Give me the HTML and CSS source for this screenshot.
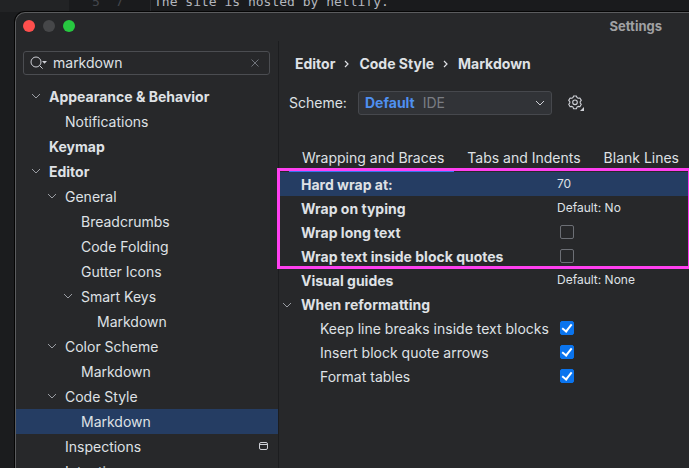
FILE: index.html
```html
<!DOCTYPE html>
<html lang="en">
<head>
<meta charset="utf-8">
<title>Settings</title>
<link rel="stylesheet" href="styles.css">
</head>
<body>
<svg class="symbols" aria-hidden="true">
  <symbol id="chevron" viewBox="0 0 10 10"><path d="M1 3l4 4 4-4" fill="none" stroke="currentColor"/></symbol>
  <symbol id="crumb" viewBox="0 0 6 10"><path d="M1 2l3 3-3 3" fill="none" stroke="currentColor" stroke-width="1.2"/></symbol>
</svg>
<div class="backdrop">
  <span class="gutter">5&nbsp;&nbsp;7</span>
  <code class="source">The site is hosted by netlify.</code>
</div>
<main class="window">
  <header class="titlebar">
    <div class="lights">
      <button class="light close" aria-label="Close"></button>
      <button class="light minimize" aria-label="Minimize"></button>
      <button class="light zoom" aria-label="Zoom"></button>
    </div>
    <h1 class="title">Settings</h1>
  </header>
  <div class="content">
    <aside class="sidebar">
      <div class="search">
        <svg class="search-icon" viewBox="0 0 17 14" aria-hidden="true">
          <circle cx="6" cy="6" r="5" fill="none" stroke="#ced0d6"/>
          <path d="M9.6 9.6l3 3" stroke="#ced0d6"/>
          <path d="M12 5h5l-2.5 2.7z" fill="#ced0d6"/>
        </svg>
        <input class="search-input" type="text" value="markdown" aria-label="Search settings">
        <button class="clear" aria-label="Clear search">
          <svg class="clear-icon" viewBox="0 0 8 8"><path d="M.5.5l7 7M7.5.5l-7 7" stroke="#6f737a"/></svg>
        </button>
      </div>
      <ul class="tree">
        <li class="node l1 strong"><svg class="arrow"><use href="#chevron"/></svg>Appearance &amp; Behavior</li>
        <li class="node l2"><span class="arrow"></span>Notifications</li>
        <li class="node l1 strong"><span class="arrow"></span>Keymap</li>
        <li class="node l1 strong"><svg class="arrow"><use href="#chevron"/></svg>Editor</li>
        <li class="node l2"><svg class="arrow"><use href="#chevron"/></svg>General</li>
        <li class="node l3"><span class="arrow"></span>Breadcrumbs</li>
        <li class="node l3"><span class="arrow"></span>Code Folding</li>
        <li class="node l3"><span class="arrow"></span>Gutter Icons</li>
        <li class="node l3"><svg class="arrow"><use href="#chevron"/></svg>Smart Keys</li>
        <li class="node l4"><span class="arrow"></span>Markdown</li>
        <li class="node l2"><svg class="arrow"><use href="#chevron"/></svg>Color Scheme</li>
        <li class="node l3"><span class="arrow"></span>Markdown</li>
        <li class="node l2"><svg class="arrow"><use href="#chevron"/></svg>Code Style</li>
        <li class="node l3 selected"><span class="arrow"></span>Markdown</li>
        <li class="node l2"><span class="arrow"></span>Inspections
          <svg class="project-icon" viewBox="0 0 10 10" aria-hidden="true"><rect x=".5" y="1.5" width="8" height="7" rx="1.5" fill="none" stroke="#ced0d6"/><path d="M1 3.5h7" stroke="#ced0d6"/></svg>
        </li>
        <li class="node l2"><span class="arrow"></span>Intentions</li>
      </ul>
    </aside>
    <section class="panel">
      <nav class="crumbs">
        <a class="crumb" href="#">Editor</a><svg class="sep"><use href="#crumb"/></svg><a class="crumb" href="#">Code Style</a><svg class="sep"><use href="#crumb"/></svg><a class="crumb" href="#">Markdown</a>
      </nav>
      <div class="scheme">
        <label class="scheme-label" for="scheme">Scheme:</label>
        <button class="combo" id="scheme" aria-haspopup="listbox">
          <span class="combo-name">Default</span><span class="combo-kind">IDE</span>
          <svg class="combo-arrow"><use href="#chevron"/></svg>
        </button>
        <button class="gear" aria-label="Scheme actions">
          <svg class="gear-icon" viewBox="0 0 17 17">
            <path d="M5.6 1h2.8l.6 1.600 1.200.7 1.700-.3 1.400 2.400-1.100 1.300v1.300l1.100 1.300-1.400 2.400-1.700-.3-1.200.7-.6 1.600H5.600L5 12.100l-1.200-.7-1.700.3L.7 9.300 1.800 8V6.700L.7 5.400 2.100 3l1.700.3L5 2.600z" fill="none" stroke="#ced0d6" stroke-width="1.1" stroke-linejoin="round"/>
            <circle cx="7" cy="7.300" r="2.300" fill="none" stroke="#ced0d6" stroke-width="1.1"/>
            <path d="M16 12v4h-4z" fill="#ced0d6"/>
          </svg>
        </button>
      </div>
      <div class="tabs" role="tablist">
        <button class="tab active" role="tab">Wrapping and Braces</button>
        <button class="tab" role="tab">Tabs and Indents</button>
        <button class="tab" role="tab">Blank Lines</button>
      </div>
      <div class="options">
        <table class="grid">
          <tbody>
            <tr class="row current"><th class="name" scope="row">Hard wrap at:</th><td class="value">70</td></tr>
            <tr class="row"><th class="name" scope="row">Wrap on typing</th><td class="value">Default: No</td></tr>
            <tr class="row"><th class="name" scope="row"><label for="long">Wrap long text</label></th><td class="value"><input class="check" id="long" type="checkbox"></td></tr>
            <tr class="row"><th class="name" scope="row"><label for="quotes">Wrap text inside block quotes</label></th><td class="value"><input class="check" id="quotes" type="checkbox"></td></tr>
            <tr class="row"><th class="name" scope="row">Visual guides</th><td class="value">Default: None</td></tr>
            <tr class="row"><th class="name group" scope="row"><svg class="arrow"><use href="#chevron"/></svg>When reformatting</th><td class="value"></td></tr>
            <tr class="row"><th class="name child" scope="row"><label for="keep">Keep line breaks inside text blocks</label></th><td class="value"><input class="check" id="keep" type="checkbox" checked></td></tr>
            <tr class="row"><th class="name child" scope="row"><label for="arrows">Insert block quote arrows</label></th><td class="value"><input class="check" id="arrows" type="checkbox" checked></td></tr>
            <tr class="row"><th class="name child" scope="row"><label for="tables">Format tables</label></th><td class="value"><input class="check" id="tables" type="checkbox" checked></td></tr>
          </tbody>
        </table>
        <div class="highlight"></div>
      </div>
    </section>
  </div>
</main>
</body>
</html>
```
FILE: styles.css
```css
*,
*::after {
  box-sizing: border-box;
}

body {
  margin: 0;
  height: 100vh;
  overflow: hidden;
  display: flex;
  flex-direction: column;
  background: #1b1c1e;
  color: #dfe1e5;
  font: 14px/24px Inter, "Liberation Sans", sans-serif;
}

button {
  padding: 0;
  border: 0;
  background: none;
  color: inherit;
  font: inherit;
}

.symbols {
  display: none;
}

.backdrop {
  flex: none;
  display: flex;
  align-items: flex-end;
  height: 12px;
  padding-left: 69px;
  overflow: hidden;
  background: linear-gradient(90deg, #222325 69px, #1a1b1d 69px);
  font: 13px/20px "DejaVu Sans Mono", monospace;
}

.gutter {
  width: 82px;
  padding-left: 23px;
  border-right: 1px solid #292a2d;
  color: #43464c;
}

.source {
  padding-left: 3px;
  color: #b4b7bd;
  font: inherit;
}

.window {
  flex: 1;
  min-height: 0;
  display: flex;
  flex-direction: column;
  margin-left: 15px;
  border: solid #5b5c5e;
  border-width: 1px 0 0 1px;
  border-top-left-radius: 10px;
  box-shadow: 0 0 0 1px #050505;
  background: #27282a;
  overflow: hidden;
}

.titlebar {
  flex: none;
  display: flex;
  align-items: center;
  justify-content: space-between;
  height: 28px;
  padding: 0 27px 2px 7px;
}

.lights {
  display: flex;
  gap: 8px;
}

.light {
  width: 12px;
  height: 12px;
  border-radius: 50%;
}

.close {
  background: #ff4f4d;
}

.minimize {
  background: #464749;
}

.zoom {
  background: #27c840;
}

.title {
  margin: 0;
  color: #a0a1a3;
  font-size: 13px;
  font-weight: 700;
}

.content {
  flex: 1;
  min-height: 0;
  display: flex;
}

.sidebar {
  flex: none;
  width: 263px;
  border-right: 1px solid #1c1d1f;
  overflow: hidden;
}

.search {
  display: flex;
  align-items: center;
  height: 24px;
  margin: 10px 8px 9px 7px;
  padding: 0 10px 0 6px;
  border: 1px solid #4b4d51;
  border-radius: 3px;
}

.search-icon {
  flex: none;
  width: 17px;
  height: 14px;
}

.search-input {
  flex: 1;
  min-width: 0;
  height: 20px;
  margin: 0;
  padding: 0 0 0 6px;
  border: 0;
  outline: 0;
  background: none;
  color: inherit;
  font: inherit;
}

.clear {
  display: flex;
}

.clear-icon {
  width: 8px;
  height: 8px;
}

.tree {
  margin: 0;
  padding: 0;
  list-style: none;
}

.node {
  display: flex;
  align-items: center;
  height: 25px;
  padding-right: 9px;
  white-space: nowrap;
}

.strong {
  font-weight: 700;
}

.l1 {
  padding-left: 15px;
}

.l2 {
  padding-left: 31px;
}

.l3 {
  padding-left: 47px;
}

.l4 {
  padding-left: 63px;
}

.selected {
  background: #253d63;
}

.arrow {
  flex: none;
  width: 10px;
  height: 10px;
  margin: 0 8px 2px 0;
  color: #9a9da3;
}

.project-icon {
  width: 10px;
  height: 10px;
  margin: 0 0 2px auto;
}

.panel {
  flex: 1;
  min-width: 0;
}

.crumbs {
  display: flex;
  align-items: center;
  gap: 9px;
  height: 24px;
  margin: 11px 0 0 16px;
  font-weight: 700;
}

.crumb {
  color: inherit;
  text-decoration: none;
}

.sep {
  width: 6px;
  height: 10px;
}

.scheme {
  display: flex;
  align-items: center;
  margin: 15px 0 0 10px;
}

.scheme-label {
  width: 69px;
}

.combo {
  display: flex;
  align-items: center;
  gap: 8px;
  width: 194px;
  height: 24px;
  padding: 0 6px;
  border: 1px solid #46484d;
  border-radius: 3px;
  background: #313337;
}

.combo-name {
  color: #4f90f0;
  font-weight: 700;
}

.combo-kind {
  color: #7a7d83;
}

.combo-arrow {
  width: 10px;
  height: 10px;
  margin-left: auto;
  color: #ced0d6;
}

.gear {
  display: flex;
  margin-left: 16px;
}

.gear-icon {
  width: 17px;
  height: 17px;
}

.tabs {
  display: flex;
  height: 26px;
  margin: 31px 0 0 10px;
  white-space: nowrap;
}

.tab {
  flex: none;
  padding: 0 10px 0 13px;
  border-bottom: 2px solid transparent;
}

.active {
  border-color: #3574f0;
}

.options {
  position: relative;
  margin-right: 1px;
}

.grid {
  width: 100%;
  table-layout: fixed;
  border-collapse: collapse;
}

.row {
  height: 24px;
}

.current {
  background: #253d63;
}

.name {
  width: 278px;
  padding: 2px 0 0 22px;
  line-height: 22px;
  text-align: left;
  white-space: nowrap;
}

.group {
  padding-left: 3px;
}

.group .arrow {
  margin: 0 9px 0 0;
}

.child {
  padding-left: 41px;
  font-weight: 400;
}

.value {
  padding: 0;
  font-size: 12px;
}

.check {
  appearance: none;
  display: block;
  width: 14px;
  height: 14px;
  margin: 0 0 0 3px;
  border: 1px solid #6c6f75;
  border-radius: 2px;
}

.check:checked {
  border-color: #0a74ee;
  background: #0a74ee;
}

.check:checked::after {
  content: "";
  display: block;
  width: 6px;
  height: 10px;
  margin-left: 3px;
  border: solid #fff;
  border-width: 0 2px 2px 0;
  transform: rotate(38deg);
}

.highlight {
  position: absolute;
  inset: -4px -1px auto -2px;
  height: 101px;
  border: 3px solid #ff40f0;
  border-right-width: 1px;
  pointer-events: none;
}
```
